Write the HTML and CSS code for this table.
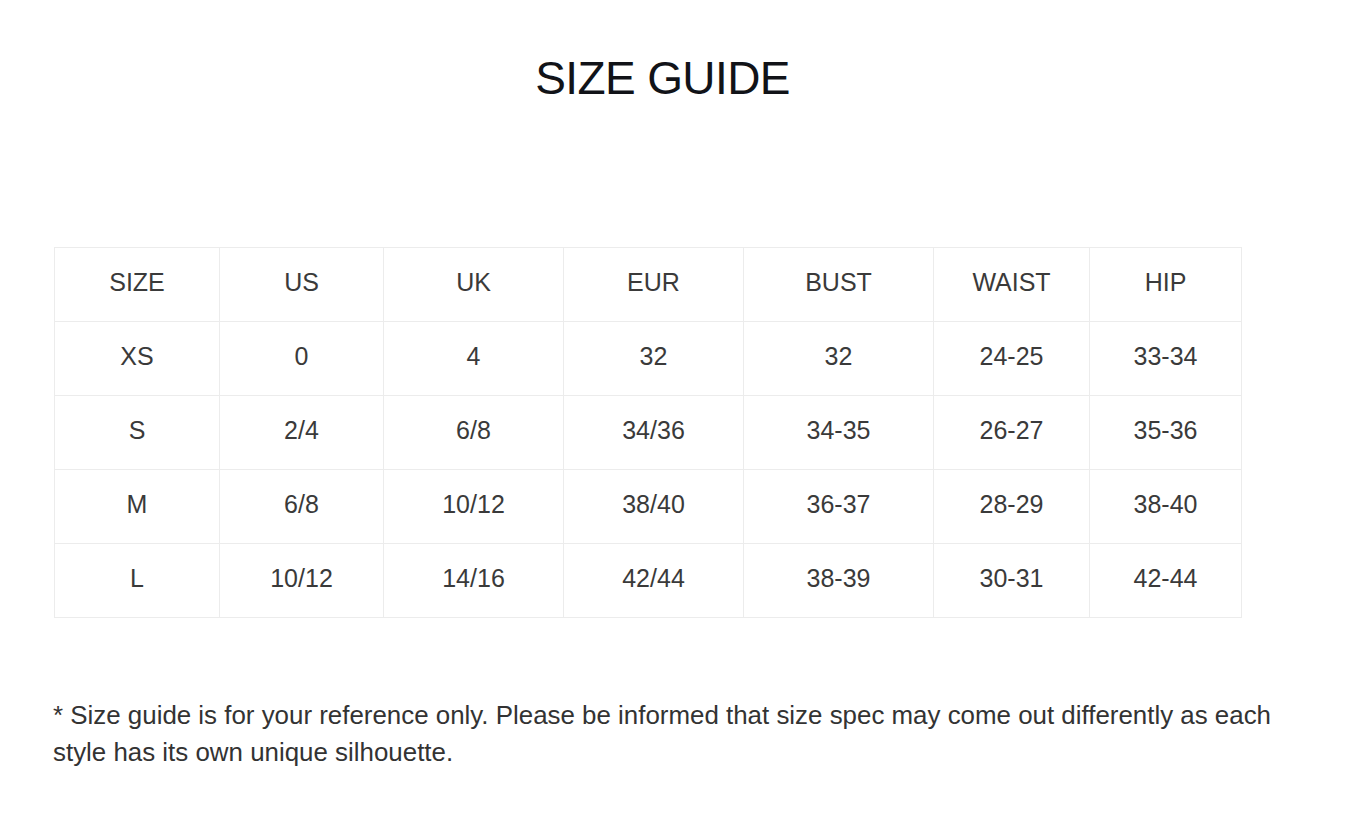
FILE: index.html
```html
<!DOCTYPE html>
<html>
<head>
<meta charset="utf-8">
<link rel="stylesheet" href="styles.css">
</head>
<body>
<main class="page">
  <h1 class="title">SIZE GUIDE</h1>
  <table class="sizes">
    <tr><td>SIZE</td><td>US</td><td>UK</td><td>EUR</td><td>BUST</td><td>WAIST</td><td>HIP</td></tr>
    <tr><td>XS</td><td>0</td><td>4</td><td>32</td><td>32</td><td>24-25</td><td>33-34</td></tr>
    <tr><td>S</td><td>2/4</td><td>6/8</td><td>34/36</td><td>34-35</td><td>26-27</td><td>35-36</td></tr>
    <tr><td>M</td><td>6/8</td><td>10/12</td><td>38/40</td><td>36-37</td><td>28-29</td><td>38-40</td></tr>
    <tr><td>L</td><td>10/12</td><td>14/16</td><td>42/44</td><td>38-39</td><td>30-31</td><td>42-44</td></tr>
  </table>
  <p class="note">* Size guide is for your reference only. Please be informed that size spec may come out differently as each style has its own unique silhouette.</p>
</main>
</body>
</html>
```
FILE: styles.css
```css
html, body {
  margin: 0;
  padding: 0;
  background: #ffffff;
}
.page {
  width: 1219px;
  padding: 47px 0 0 53px;
  font-family: "Liberation Sans", Arial, sans-serif;
  color: #333333;
}
.title {
  margin: 0;
  text-align: center;
  font-family: "Liberation Sans", Arial, sans-serif;
  font-weight: 400;
  font-size: 46px;
  letter-spacing: -0.6px;
  line-height: 62px;
  color: #111318;
}
.sizes {
  margin: 138px 0 0 1px;
  border-collapse: collapse;
  width: 1188px;
  font-size: 25px;
  color: #3a3a3a;
}
.sizes td {
  border: 1px solid #ececec;
  height: 69px;
  padding: 0 0 4px 0;
  text-align: center;
  vertical-align: middle;
}
.sizes td:nth-child(1) { width: 164px; }
.sizes td:nth-child(2) { width: 163px; }
.sizes td:nth-child(3) { width: 179px; }
.sizes td:nth-child(4) { width: 179px; }
.sizes td:nth-child(5) { width: 189px; }
.sizes td:nth-child(6) { width: 155px; }
.sizes td:nth-child(7) { width: 151px; }
.note {
  margin: 79px 0 0 0;
  font-size: 25.9px;
  line-height: 37px;
  color: #333333;
  width: 1226px;
}
```
